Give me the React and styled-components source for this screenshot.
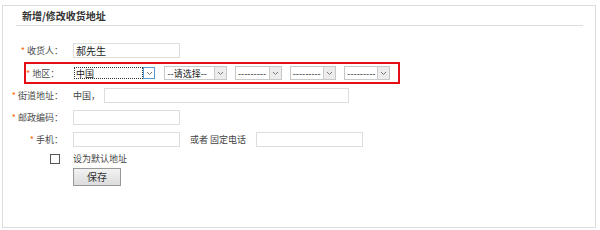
import styled, { createGlobalStyle, css } from "styled-components";

const GlobalStyle = createGlobalStyle`
body {
    margin: 0;
    background: #fff;
    font-family: "Noto Sans CJK SC", "Liberation Sans", sans-serif;
}
`;

const Panel = styled.div`
box-sizing: border-box;
width: 594px;
height: 223px;
margin: 5px 0 0 2px;
border: 1px solid #ddd;
`;

const TitleBar = styled.div`
margin: 0 12px 0 13px;
height: 19px;
line-height: 19px;
padding-left: 6px;
border-bottom: 1px solid #ddd;
font-size: 10px;
font-weight: bold;
color: #333;
`;

const Form = styled.div`
display: flex;
flex-direction: column;
padding-top: 13px;
`;

const Row = styled.div`
display: flex;
align-items: center;
height: ${p => p.$h || 22}px;
${p => p.$boxed && css`
    box-sizing: border-box;
    width: 376px;
    margin-left: 21px;
    border: 2px solid #e50e14;
`}
`;

const Label = styled.span`
width: ${p => p.$w || 60}px;
margin-right: ${p => p.$gap || 10}px;
text-align: right;
white-space: nowrap;
font-size: 9px;
color: #4a4a4a;
`;

const Star = styled.span`
color: #f60;
font-size: 9px;
margin-right: 2px;
`;

const Input = styled.input`
box-sizing: border-box;
width: ${p => p.$w || 107}px;
height: 15px;
padding: 0 2px;
border: 1px solid #ddd;
outline: none;
font-family: inherit;
font-size: 10px;
color: #222;
`;

const Text = styled.span`
font-size: 9px;
color: #444;
white-space: nowrap;
margin: 0 ${p => p.$mr || 0}px 0 ${p => p.$ml || 0}px;
`;

const Select = styled.div`
box-sizing: border-box;
display: flex;
align-items: stretch;
width: ${p => p.$w}px;
height: 14px;
margin-right: 8px;
border: 1px solid ${p => (p.$focus ? "transparent" : "#c8c8c8")};
background: #fff;
font-size: 9px;
color: #222;
`;

const SelectText = styled.span`
flex: 1;
display: flex;
align-items: center;
padding-left: 2px;
white-space: nowrap;
${p => p.$focus && css`
    outline: 1px dotted #333;
    outline-offset: -1px;
`}
`;

const Arrow = styled.span`
box-sizing: border-box;
width: 12px;
display: flex;
align-items: center;
justify-content: center;
border-left: 1px solid #ccc;
background: #ececec;
${p => p.$focus && css`
    border: 1px solid #5b9bd5;
    background: #fff;
`}
`;

const CheckBox = styled.span`
box-sizing: border-box;
width: 10px;
height: 10px;
margin: 0 13px 0 47px;
border: 1px solid #555;
background: #fff;
`;

const SaveButton = styled.button`
box-sizing: border-box;
width: 48px;
height: 18px;
margin-left: 70px;
padding: 0;
border: 1px solid #999;
background: linear-gradient(#f2f2f2, #dcdcdc);
font-family: inherit;
font-size: 10px;
color: #333;
`;

function Chevron() {
    return (
        <svg width="7" height="5" viewBox="0 0 7 5">
            <path d="M1 1 L3.5 3.5 L6 1" fill="none" stroke="#777" strokeWidth="1" />
        </svg>
    );
}

function FakeSelect({ w, text, focus }) {
    return (
        <Select $w={w} $focus={focus}>
            <SelectText $focus={focus}>{text}</SelectText>
            <Arrow $focus={focus}><Chevron /></Arrow>
        </Select>
    );
}

export default function App() {
    return (
        <>
            <GlobalStyle />
            <Panel>
                <TitleBar>新增/修改收货地址</TitleBar>
                <Form>
                    <Row $h={23}>
                        <Label><Star>*</Star>收货人：</Label>
                        <Input defaultValue="郝先生" />
                    </Row>
                    <Row $boxed>
                        <Label $w={30} $gap={17}><Star>*</Star>地区：</Label>
                        <FakeSelect w={84} text="中国" focus />
                        <FakeSelect w={63} text="--请选择--" />
                        <FakeSelect w={47} text="---------" />
                        <FakeSelect w={47} text="---------" />
                        <FakeSelect w={46} text="---------" />
                    </Row>
                    <Row>
                        <Label><Star>*</Star>街道地址：</Label>
                        <Text $mr={4}>中国，</Text>
                        <Input $w={245} />
                    </Row>
                    <Row>
                        <Label><Star>*</Star>邮政编码：</Label>
                        <Input />
                    </Row>
                    <Row>
                        <Label><Star>*</Star>手机：</Label>
                        <Input />
                        <Text $ml={10} $mr={10}>或者 固定电话</Text>
                        <Input />
                    </Row>
                    <Row $h={17}>
                        <CheckBox />
                        <Text>设为默认地址</Text>
                    </Row>
                    <Row $h={19}>
                        <SaveButton>保存</SaveButton>
                    </Row>
                </Form>
            </Panel>
        </>
    );
}
